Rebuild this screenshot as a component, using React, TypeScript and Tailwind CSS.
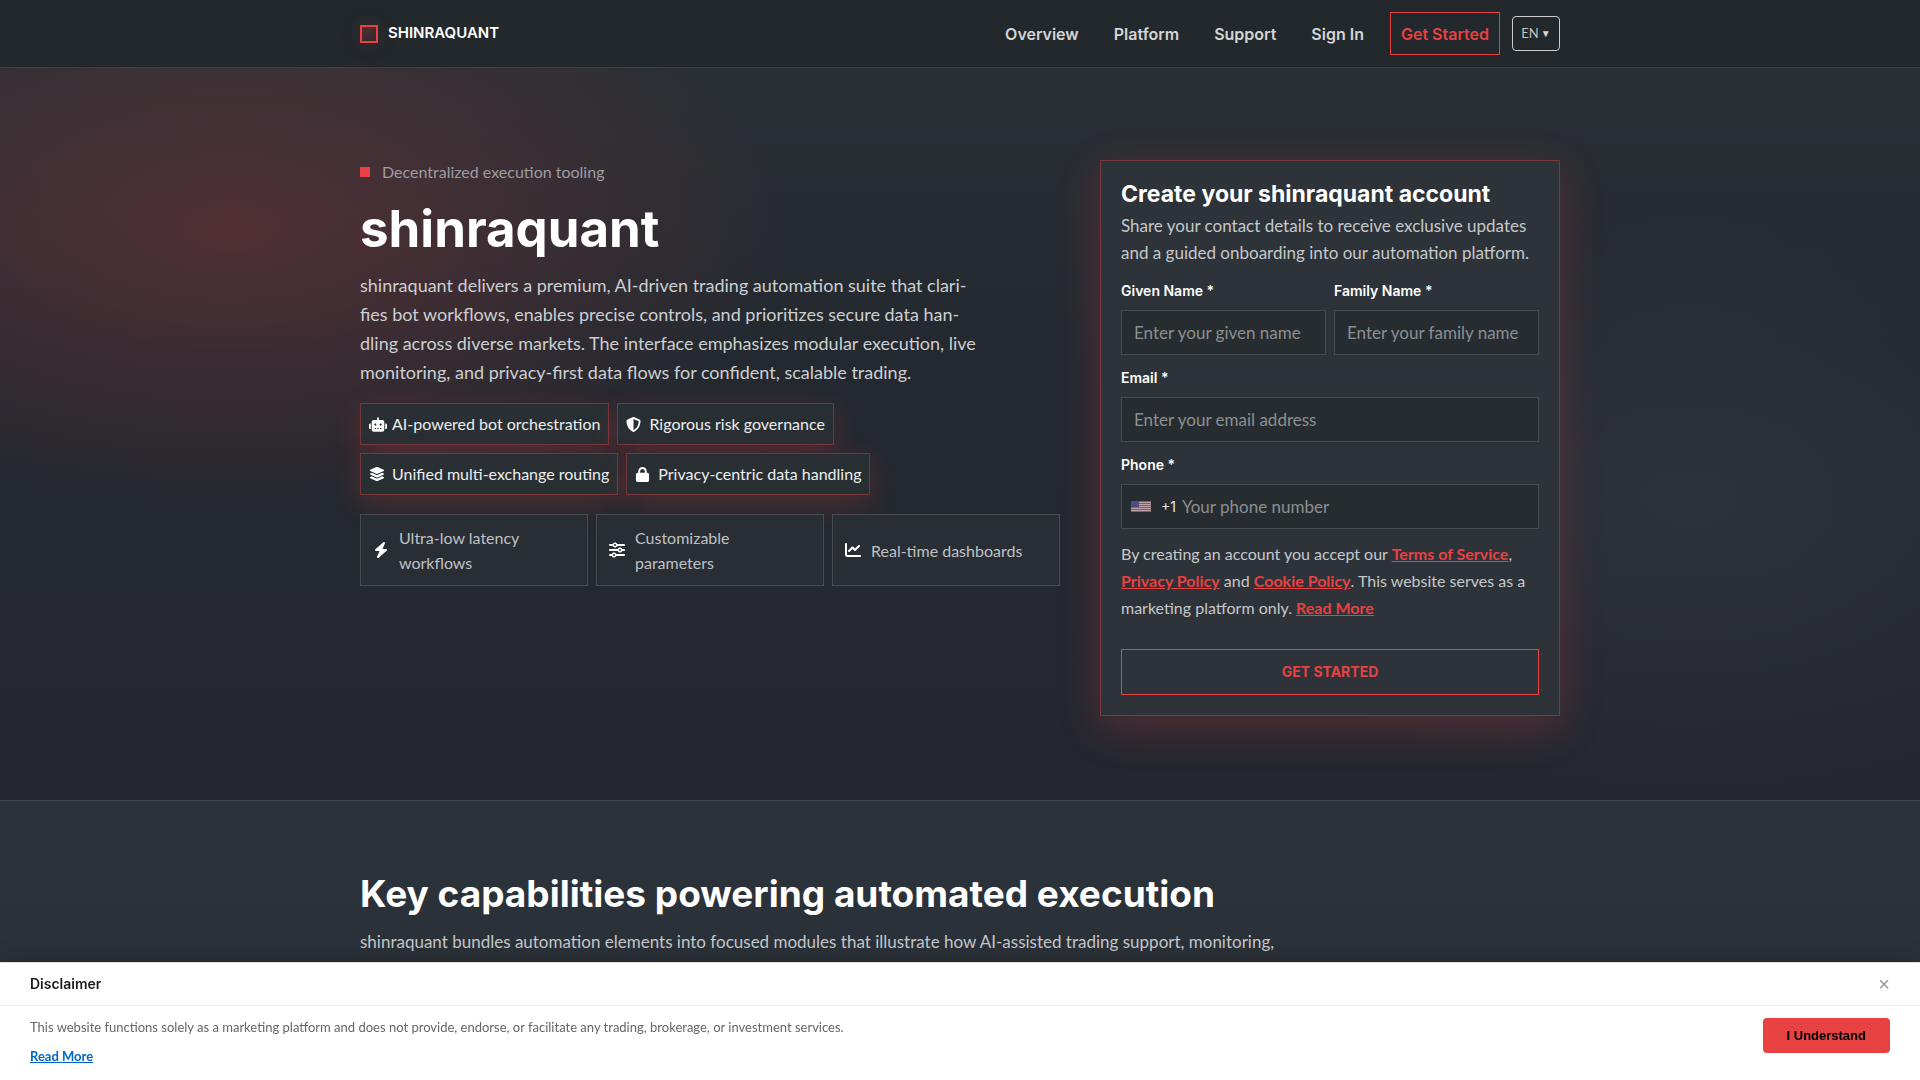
/**
 * Landing page: header, hero with the sign-up form, first content section
 * and the disclaimer bar that sticks to the bottom of the window.
 */

import { useState } from "react";
import type { FormEvent } from "react";
import {
  FaBolt,
  FaChartLine,
  FaLayerGroup,
  FaLock,
  FaRobot,
  FaShieldHalved,
  FaSliders,
} from "react-icons/fa6";

const navLinks = ["Overview", "Platform", "Support", "Sign In"];

const chips = [
  { label: "AI-powered bot orchestration", icon: <FaRobot className="h-[15px] w-[18px]" /> },
  { label: "Rigorous risk governance", icon: <FaShieldHalved className="size-[15px]" /> },
  { label: "Unified multi-exchange routing", icon: <FaLayerGroup className="size-4" /> },
  { label: "Privacy-centric data handling", icon: <FaLock className="size-[15px]" /> },
];

const features = [
  { label: "Ultra-low latency workflows", icon: <FaBolt className="size-4" /> },
  { label: "Customizable parameters", icon: <FaSliders className="size-4" /> },
  { label: "Real-time dashboards", icon: <FaChartLine className="size-4" /> },
];

const heading = "font-['Inter',sans-serif]";
const inputBox =
  "h-[45px] w-full min-w-0 border border-[#484c4f] bg-[#272c30] px-3 text-[17px] text-white placeholder:text-[#8c8f92] focus:border-[#e84142] focus:outline-none";

function Header() {
  return (
    <header className="border-b border-[#3a4043] bg-[#22282c]">
      <div className="mx-auto flex h-[67px] max-w-[1200px] items-center justify-between">
        <a
          href="#top"
          className={`${heading} flex items-center gap-2.5 text-[15px] font-semibold text-white`}
        >
          <span className="size-[18px] border-2 border-[#e84142] bg-gradient-to-br from-[#e84142]/25 to-[#e84142]/5 shadow-[0_0_24px_rgba(232,65,66,0.12)]" />
          SHINRAQUANT
        </a>
        <nav className={`${heading} flex items-center text-base font-semibold text-[#d3d5d6]`}>
          <div className="mr-[26px] flex gap-[35px]">
            {navLinks.map((l) => (
              <a key={l} href="#top">
                {l}
              </a>
            ))}
          </div>
          <a
            href="#signup"
            className="flex h-[43px] items-center border border-[#e84142] px-2.5 text-[#e84142]"
          >
            Get Started
          </a>
          <div className="ml-3 flex h-[35px] w-12 items-center justify-center gap-0.5 rounded border border-[#c9cbcd] font-['Lato',sans-serif] text-[13px] font-normal">
            <select
              aria-label="Language"
              className="field-sizing-content appearance-none bg-transparent text-[#c0c3c5]"
            >
              <option>EN</option>
            </select>
            <span aria-hidden="true" className="text-[10px]">
              ▼
            </span>
          </div>
        </nav>
      </div>
    </header>
  );
}

function Intro() {
  return (
    <div>
      <div className="flex h-6 items-center gap-3 text-base text-[#9b9da0]">
        <span className="size-2.5 bg-[#e84142]" />
        Decentralized execution tooling
      </div>
      <h1 className={`${heading} mt-[17px] text-[51px] leading-[56px] font-bold text-white`}>
        shinraquant
      </h1>
      <p className="mt-3.5 text-[18px] leading-[29px] text-[#cccfd1]">
        shinraquant delivers a premium, AI-driven trading automation suite that clari-
        <br />
        fies bot workflows, enables precise controls, and prioritizes secure data han-
        <br />
        dling across diverse markets. The interface emphasizes modular execution, live
        <br />
        monitoring, and privacy-first data flows for confident, scalable trading.
      </p>
      <ul className="mt-4 flex max-w-[620px] flex-wrap gap-2">
        {chips.map((c) => (
          <li
            key={c.label}
            className="flex h-[42px] items-center gap-[5px] border border-[#e84142]/40 bg-[#293034]/85 px-2 text-base text-[#eceded] shadow-[0_8px_28px_rgba(232,65,66,0.22)]"
          >
            <span className="w-[18px] text-white">{c.icon}</span>
            {c.label}
          </li>
        ))}
      </ul>
      <ul className="mt-[19px] grid grid-cols-3 gap-2">
        {features.map((f) => (
          <li
            key={f.label}
            className="flex min-h-[72px] items-center gap-2.5 border border-[#484c50] bg-[#292d34] px-3 text-base leading-[25px] text-[#bfc2c5]"
          >
            <span className="text-white">{f.icon}</span>
            <span className="max-w-[160px]">{f.label}</span>
          </li>
        ))}
      </ul>
    </div>
  );
}

function Flag() {
  return (
    <svg viewBox="0 0 20 11" className="h-[11px] w-5 shrink-0 opacity-75" aria-hidden="true">
      <rect width="20" height="11" fill="#f5cdd4" />
      {[0, 2, 4, 6, 8, 10].map((y) => (
        <rect key={y} y={y} width="20" height="1" fill="#dc5068" />
      ))}
      <rect width="8" height="6" fill="#5a5a98" />
    </svg>
  );
}

function Field({ id, label, placeholder }: { id: string; label: string; placeholder: string }) {
  return (
    <div className="flex flex-col gap-[9px]">
      <label htmlFor={id} className={`${heading} text-sm font-semibold text-white`}>
        {label} *
      </label>
      <input id={id} placeholder={placeholder} className={inputBox} />
    </div>
  );
}

function TermLink({ children }: { children: string }) {
  return (
    <a href="#terms" className="font-bold text-[#e84142] underline">
      {children}
    </a>
  );
}

function SignUp() {
  function onSubmit(e: FormEvent) {
    e.preventDefault();
  }

  return (
    <form
      id="signup"
      onSubmit={onSubmit}
      className="border border-[#e84142]/40 bg-[#2d3339] p-5 shadow-[0_12px_40px_rgba(232,65,66,0.24)]"
    >
      <h2 className={`${heading} text-[23px] leading-[26px] font-bold text-white`}>
        Create your shinraquant account
      </h2>
      <p className="mt-[5px] text-[17px] leading-[27px] text-[#c5c8ca]">
        Share your contact details to receive exclusive updates and a guided onboarding into our
        automation platform.
      </p>
      <div className="mt-[15px] flex flex-col gap-[13px]">
        <div className="grid grid-cols-2 gap-2">
          <Field id="given" label="Given Name" placeholder="Enter your given name" />
          <Field id="family" label="Family Name" placeholder="Enter your family name" />
        </div>
        <Field id="email" label="Email" placeholder="Enter your email address" />
        <div className="flex flex-col gap-[9px]">
          <label htmlFor="phone" className={`${heading} text-sm font-semibold text-white`}>
            Phone *
          </label>
          <div className="flex h-[45px] items-center border border-[#484c4f] bg-[#272c30] pl-[9px]">
            <Flag />
            <span className={`${heading} ml-2.5 text-sm text-[#e6e7e8]`}>+1</span>
            <input
              id="phone"
              type="tel"
              placeholder="Your phone number"
              className="ml-1.5 h-full min-w-0 flex-1 bg-transparent text-[17px] text-white placeholder:text-[#8c8f92] focus:outline-none"
            />
          </div>
        </div>
      </div>
      <p className="mt-[11px] text-base leading-[27px] text-[#c5c8ca]">
        By creating an account you accept our <TermLink>Terms of Service</TermLink>,{" "}
        <TermLink>Privacy Policy</TermLink> and <TermLink>Cookie Policy</TermLink>. This website
        serves as a marketing platform only. <TermLink>Read More</TermLink>
      </p>
      <button
        type="submit"
        className={`${heading} mt-7 h-[46px] w-full border border-[#e84142] text-sm font-bold text-[#e84142]`}
      >
        GET STARTED
      </button>
    </form>
  );
}

function Disclaimer({ onClose }: { onClose: () => void }) {
  return (
    <aside className="fixed inset-x-0 bottom-0 border-t border-[#dddddd] bg-white shadow-[0_-4px_20px_rgba(0,0,0,0.15)]">
      <div className="flex h-[43px] items-center justify-between border-b border-[#eeeeee] px-[30px]">
        <h2 className={`${heading} text-sm font-semibold text-[#1a1a1a]`}>Disclaimer</h2>
        <button
          type="button"
          aria-label="Close"
          onClick={onClose}
          className="font-['Liberation_Sans',sans-serif] text-xl text-[#999999]"
        >
          ×
        </button>
      </div>
      <div className="flex items-start justify-between px-[30px] pt-3 pb-[15px]">
        <div className="text-[13px] leading-[18px] text-[#666666]">
          <p>
            This website functions solely as a marketing platform and does not provide, endorse, or
            facilitate any trading, brokerage, or investment services.
          </p>
          <a href="#terms" className="mt-[11px] inline-block font-bold text-[#0066cc] underline">
            Read More
          </a>
        </div>
        <button
          type="button"
          onClick={onClose}
          className="h-[35px] rounded bg-[#e84142] px-6 font-['Liberation_Sans',sans-serif] text-[13px] font-bold text-black"
        >
          I Understand
        </button>
      </div>
    </aside>
  );
}

export default function App() {
  const [showDisclaimer, setShowDisclaimer] = useState(true);

  return (
    <div id="top" className="flex min-h-screen flex-col bg-[#2c3239] font-['Lato',sans-serif]">
      <Header />
      <main className="flex flex-1 flex-col">
        <section className="border-b border-[#43474d] bg-[radial-gradient(560px_280px_at_12%_160px,rgba(232,65,66,0.22),transparent),radial-gradient(480px_300px_at_88%_430px,rgba(90,100,115,0.16),transparent),linear-gradient(to_bottom,#2a2f34,#242930_40%,#24272f)] pt-[92px] pb-[84px]">
          <div className="mx-auto grid max-w-[1200px] grid-cols-[minmax(0,700fr)_minmax(0,460fr)] gap-10">
            <Intro />
            <SignUp />
          </div>
        </section>
        <section className="flex-1 bg-gradient-to-b from-[#2c333a] to-[#2b2f36] pt-[71px]">
          <div className="mx-auto max-w-[1200px]">
            <h2 className={`${heading} text-[37px] leading-[44px] font-bold text-white`}>
              Key capabilities powering automated execution
            </h2>
            <p className="mt-3 text-[17px] leading-7 text-[#c5c8ca]">
              shinraquant bundles automation elements into focused modules that illustrate how
              AI-assisted trading support, monitoring,
            </p>
          </div>
        </section>
      </main>
      {showDisclaimer && <Disclaimer onClose={() => setShowDisclaimer(false)} />}
    </div>
  );
}
